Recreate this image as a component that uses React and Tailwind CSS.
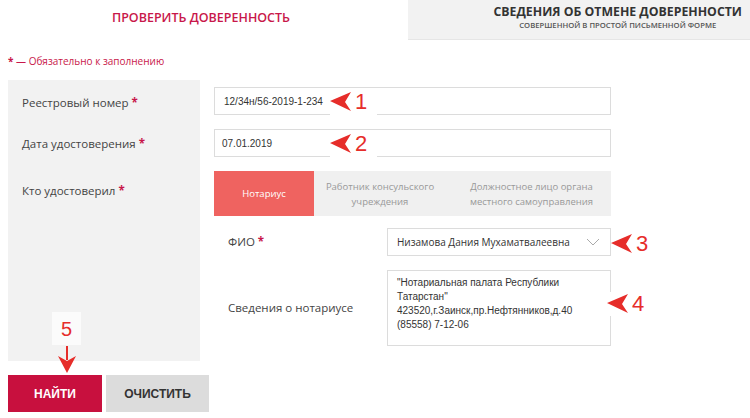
const label = "font-['Open_Sans',sans-serif] text-[11.5px] text-[#444]";
const field = "font-['Liberation_Sans',Arial,sans-serif] text-[10px] text-[#333]";

function Star() {
  return <span className="text-[#c8174a] font-bold"> *</span>;
}

function ArrowLeft({ className }) {
  return (
    <svg className={className} width="22" height="20" viewBox="0 0 22 20">
      <polygon points="0,9 21,0 15,10 21,19" fill="#e62d2a" />
    </svg>
  );
}

function Mark({ n, className }) {
  return (
    <div className={`absolute flex items-center bg-white ${className}`}>
      <ArrowLeft />
      <span className="ml-[3px] text-[22px] leading-none text-[#e62d2a] font-['Liberation_Sans',Arial,sans-serif]">
        {n}
      </span>
    </div>
  );
}

export default function App() {
  return (
    <div className="relative w-[750px] h-[418px] bg-white overflow-hidden">
      {/* tabs */}
      <div className="flex h-[40px]">
        <div className="w-[402px] flex items-center justify-center pb-[4px] font-['Open_Sans',sans-serif] font-semibold text-[12.5px] text-[#c8174a]">
          ПРОВЕРИТЬ ДОВЕРЕННОСТЬ
        </div>
        <div className="flex-1 flex justify-end pr-[8px] ml-[6px] bg-[#f2f2f2] border-b border-[#e6e6e6]">
          <div className="text-center pt-[3px] font-['Open_Sans',sans-serif]">
            <div className="text-[12.3px] font-bold text-[#333] leading-[17px]">
              СВЕДЕНИЯ ОБ ОТМЕНЕ ДОВЕРЕННОСТИ
            </div>
            <div className="text-[7.7px] font-semibold text-[#555] leading-[10px]">
              СОВЕРШЕННОЙ В ПРОСТОЙ ПИСЬМЕННОЙ ФОРМЕ
            </div>
          </div>
        </div>
      </div>

      <div className="px-[8px] pt-[14px] h-[40px] font-['Open_Sans',sans-serif] text-[10px] text-[#c8174a]">
        <span className="font-bold">*</span> — Обязательно к заполнению
      </div>

      {/* form */}
      <div className="ml-[8px]">
        <div className="flex h-[42px]">
          <div className={`w-[192px] bg-[#f2f2f2] pl-[14px] pt-[14px] ${label}`}>
            Реестровый номер<Star />
          </div>
          <div className={`ml-[14px] mt-[7px] w-[397px] h-[28px] border border-[#dcdcdc] flex items-center pl-[9px] ${field}`}>
            12/34н/56-2019-1-234
          </div>
        </div>
        <div className="flex h-[42px]">
          <div className={`w-[192px] bg-[#f2f2f2] pl-[14px] pt-[13px] ${label}`}>
            Дата удостоверения<Star />
          </div>
          <div className={`ml-[14px] mt-[7px] w-[397px] h-[28px] border border-[#dcdcdc] flex items-center pl-[7px] ${field}`}>
            07.01.2019
          </div>
        </div>
        <div className="flex h-[197px]">
          <div className={`w-[192px] bg-[#f2f2f2] pl-[14px] pt-[18px] ${label}`}>
            Кто удостоверил<Star />
          </div>
          <div className="ml-[14px] pt-[7px] w-[397px]">
            <div className="flex h-[45px] font-['Open_Sans',sans-serif] text-[9.5px] leading-[15px]">
              <div className="w-[100px] bg-[#ef6360] text-white flex items-center justify-center">
                Нотариус
              </div>
              <div className="w-[132px] bg-[#f0f0f0] text-[#999] flex items-center justify-center text-center">
                Работник консульского<br />учреждения
              </div>
              <div className="flex-1 bg-[#f0f0f0] text-[#999] flex items-center justify-center text-center pl-[6px]">
                Должностное лицо органа<br />местного самоуправления
              </div>
            </div>
            <div className="flex mt-[12px] h-[28px]">
              <div className={`w-[173px] pl-[14px] flex items-center ${label}`}>
                <span>
                  ФИО<Star />
                </span>
              </div>
              <div className="flex-1 border border-[#dcdcdc] flex items-center justify-between pl-[9px] pr-[10px] font-['Open_Sans',sans-serif] text-[10px] text-[#333] whitespace-nowrap">
                Низамова Дания Мухаматвалеевна
                <svg width="14" height="8" viewBox="0 0 14 8">
                  <polyline points="1,1 7,7 13,1" fill="none" stroke="#aaa" strokeWidth="1" />
                </svg>
              </div>
            </div>
            <div className="flex mt-[14px] h-[76px]">
              <div className={`w-[173px] pl-[14px] flex items-center ${label}`}>
                Сведения о нотариусе
              </div>
              <div className={`flex-1 border border-[#dcdcdc] pl-[9px] pt-[5px] leading-[14px] text-[10.5px] ${field}`}>
                "Нотариальная палата Республики
                <br />
                Татарстан"
                <br />
                423520,г.Заинск,пр.Нефтянников,д.40
                <br />
                (85558) 7-12-06
              </div>
            </div>
          </div>
        </div>

        <div className="flex gap-[4px] mt-[14px] font-['Liberation_Sans',Arial,sans-serif] font-bold text-[12px]">
          <button className="w-[94px] h-[37px] bg-[#c8103e] text-white">НАЙТИ</button>
          <button className="w-[103px] h-[37px] bg-[#dcdcdc] text-[#333]">ОЧИСТИТЬ</button>
        </div>
      </div>

      {/* annotations */}
      <Mark n="1" className="left-[330px] top-[88px] h-[27px] pr-[10px]" />
      <Mark n="2" className="left-[330px] top-[130px] h-[27px] pr-[10px]" />
      <Mark n="3" className="left-[611px] top-[232px] h-[24px] pr-[4px]" />
      <Mark n="4" className="left-[607px] top-[292px] h-[24px] pr-[4px]" />

      <div className="absolute left-[52px] top-[312px] w-[29px] h-[33px] bg-[#fbfbfb] flex items-center justify-center font-['Liberation_Sans',Arial,sans-serif] text-[20px] text-[#e62d2a]">
        5
      </div>
      <svg className="absolute left-[58px] top-[346px]" width="18" height="28" viewBox="0 0 18 28">
        <line x1="9" y1="0" x2="9" y2="14" stroke="#e62d2a" strokeWidth="2" />
        <polygon points="9,27 0,10 9,15 18,10" fill="#e62d2a" />
      </svg>
    </div>
  );
}
